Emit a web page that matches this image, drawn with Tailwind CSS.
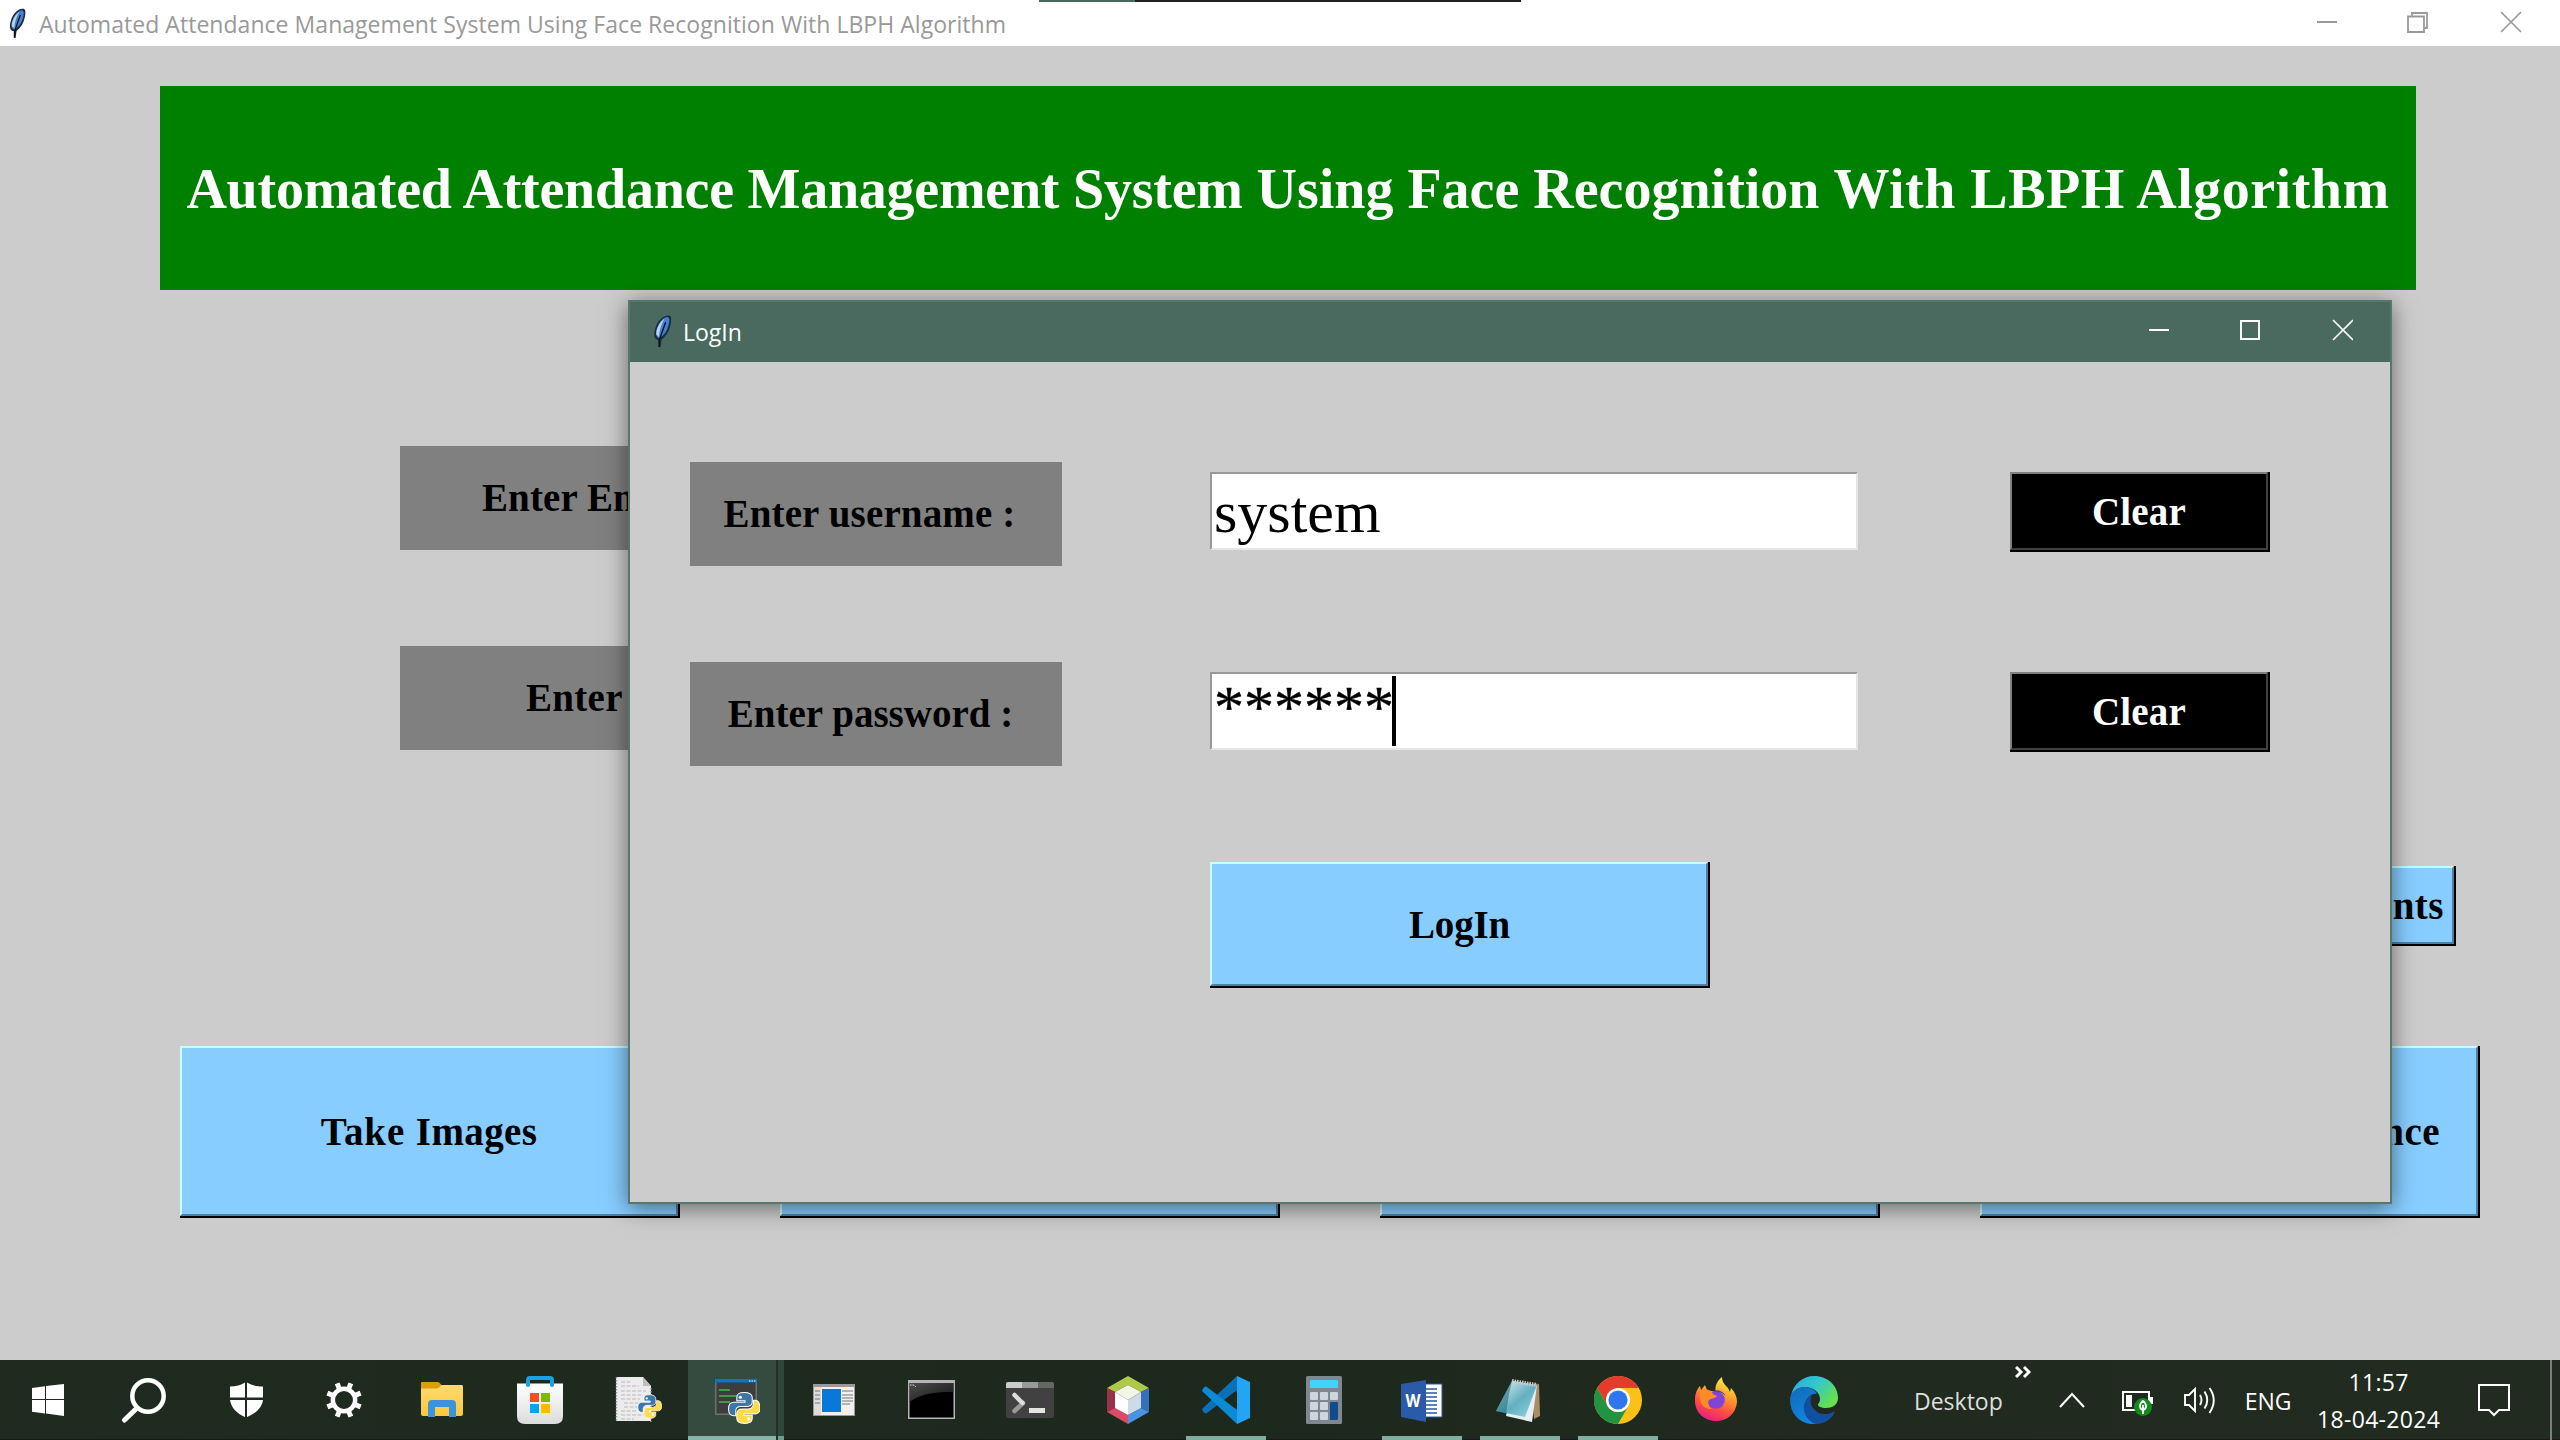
<!DOCTYPE html>
<html lang="en">
<head>
<meta charset="utf-8">
<title>Automated Attendance Management System</title>
<script src="https://cdn.jsdelivr.net/npm/@tailwindcss/browser@4"></script>
</head>
<body class="w-[2560px] h-[1440px] overflow-hidden relative bg-[#cccccc] font-['Liberation_Serif',serif]">

<svg class="absolute w-0 h-0">
  <defs>
    <symbol id="feather" viewBox="0 0 18 32">
      <path d="M14 0.500C17 0 18 2 17 8C16 15 13 20 8 24L7 31H5L5 24C1 24 0 19 2 13C4 6 9 1 14 .5Z" fill="#1a2b40"/>
      <path d="M13.800 2C17 2.500 15.500 9 13.500 14C11.500 18.500 8 21.500 5 22.500C1.500 20 2.500 15 4.500 11C6.500 6 10 2.500 13.800 2Z" fill="#4580cc"/>
      <path d="M11 3.500C6.500 7 3 12 3 19L5.500 21C6 14 8 9 11 3.500Z" fill="#b9d2ee"/>
      <path d="M12 7L6 24L6 31" stroke="#0c131b" stroke-width="1.300" fill="none"/>
    </symbol>
    <symbol id="python" viewBox="0 0 32 32">
      <path d="M16 1C10 1 9 3 9 6V9H17V10.500H6C3 10.500 1 13 1 17S3 23.500 6 23.500H8V19C8 16 10 14.500 13 14.500H19C22 14.500 24 13 24 10V6C24 3 21 1 16 1Z" fill="#3b77a8" stroke="#fff" stroke-width="1"/>
      <path d="M16.500 31C22.500 31 24 29 24 26V23H16V21.500H27C30 21.500 32 19 31.500 15S30 8.500 27 8.500H25V12C25 15.500 22 17 20 17H14C11 17 9 19 9 22V26C9 29 11 31 16.500 31Z" fill="#ffdc4a" stroke="#fff" stroke-width="1"/>
      <circle cx="12.500" cy="5.500" r="1.500" fill="#fff"/><circle cx="20.500" cy="26.500" r="1.500" fill="#fff"/>
    </symbol>
    <linearGradient id="glass" x1="0" y1="0" x2="1" y2="1"><stop offset="0" stop-color="#666"/><stop offset="1" stop-color="#1a1a1a"/></linearGradient>
    <linearGradient id="note" x1="0" y1="0" x2="1" y2="1"><stop offset="0" stop-color="#e6f5f8"/><stop offset=".55" stop-color="#64afbf"/><stop offset="1" stop-color="#8fdbe9"/></linearGradient>
    <linearGradient id="fold" x1="0" y1="0" x2="0" y2="1"><stop offset="0" stop-color="#ffdc78"/><stop offset="1" stop-color="#fdc63b"/></linearGradient>
    <linearGradient id="bag" x1="0" y1="0" x2="0" y2="1"><stop offset="0" stop-color="#fff"/><stop offset="1" stop-color="#dcdcdc"/></linearGradient>
    <linearGradient id="fox" x1=".7" y1="0" x2=".3" y2="1"><stop offset="0" stop-color="#fff34a"/><stop offset=".35" stop-color="#ffa52b"/><stop offset=".7" stop-color="#ff4a43"/><stop offset="1" stop-color="#e51a8a"/></linearGradient>
    <linearGradient id="edgeTop" x1="0" y1="0" x2="1" y2=".6"><stop offset="0" stop-color="#2aa9e0"/><stop offset=".5" stop-color="#33c6d0"/><stop offset="1" stop-color="#66e04b"/></linearGradient>
    <linearGradient id="edgeBody" x1="0" y1="0" x2=".5" y2="1"><stop offset="0" stop-color="#1369b8"/><stop offset="1" stop-color="#0f86df"/></linearGradient>
  </defs>
</svg>

<!-- main window -->
<header class="h-[46px] bg-white flex items-center justify-between relative text-[#999999]">
  <div class="flex items-center">
    <svg class="w-[17px] h-[33px] ml-[9px]"><use href="#feather"/></svg>
    <span class="ml-[13px] mt-[3px] text-[23px] tracking-[0.04px] leading-none whitespace-nowrap font-['Open_Sans',sans-serif]">Automated Attendance Management System Using Face Recognition With LBPH Algorithm</span>
  </div>
  <svg class="w-[206px] h-[24px] mr-[37px] mb-[2px]" fill="none" stroke="currentColor" stroke-width="1.800">
    <path d="M0 12H20M91 6.500H107V22H91ZM95 6V3H110V18H107"/>
    <path d="M184 2L204 22M204 2L184 22" stroke-width="1.700"/>
  </svg>
  <div class="absolute left-[1039px] top-0 flex"><i class="w-24 h-[2px] bg-[#4a695f]"></i><i class="w-[386px] h-[2px] bg-[#221f1f]"></i></div>
</header>

<main class="h-[1314px] pt-10 flex flex-col font-bold text-[39px] leading-none text-black">
  <h1 class="ml-40 w-[2256px] h-[204px] pt-[2px] bg-[#008000] text-white text-[56px] flex items-center justify-center whitespace-pre"><span class="tracking-[-0.24px]">Automated Attendance Management System </span><span>Using Face Recognition </span><span class="tracking-[0.5px]">With LBPH Algorithm</span></h1>
  <div class="mt-[156px] ml-[400px] w-[372px] h-[104px] bg-[#808080] flex items-center pl-[82px] pb-[2px] whitespace-nowrap"><span class="tracking-[0.1px]">Enter En</span></div>
  <div class="mt-24 ml-[400px] w-[372px] h-[104px] bg-[#808080] flex items-center pl-[126px] pb-[2px] whitespace-nowrap"><span class="tracking-[0.3px]">Enter</span></div>
  <div class="mt-[116px] ml-[2000px] w-[456px] h-20 bg-black"><div class="w-[454px] h-[78px] border-2 border-t-[#c6ffff] border-l-[#c6ffff] border-r-[#5080a0] border-b-[#5080a0] bg-[#87cdff] flex items-center justify-end pr-[8px] tracking-[0.5px]">nts</div></div>
  <div class="mt-[100px] ml-[180px] flex gap-[100px]">
    <div class="w-[500px] h-[172px] bg-black"><div class="w-[498px] h-[170px] border-2 border-t-[#c6ffff] border-l-[#c6ffff] border-r-[#5080a0] border-b-[#5080a0] bg-[#87cdff] flex items-center justify-center whitespace-pre"><span class="tracking-[0.9px]">Take </span><span class="tracking-[0.4px]">Images</span></div></div>
    <div class="w-[500px] h-[172px] bg-black"><div class="w-[498px] h-[170px] border-2 border-t-[#c6ffff] border-l-[#c6ffff] border-r-[#5080a0] border-b-[#5080a0] bg-[#87cdff]"></div></div>
    <div class="w-[500px] h-[172px] bg-black"><div class="w-[498px] h-[170px] border-2 border-t-[#c6ffff] border-l-[#c6ffff] border-r-[#5080a0] border-b-[#5080a0] bg-[#87cdff]"></div></div>
    <div class="w-[500px] h-[172px] bg-black"><div class="w-[498px] h-[170px] border-2 border-t-[#c6ffff] border-l-[#c6ffff] border-r-[#5080a0] border-b-[#5080a0] bg-[#87cdff] flex items-center justify-end pr-[36px] tracking-[0.5px]">nce</div></div>
  </div>
</main>

<!-- login dialog -->
<section class="absolute left-[628px] top-[300px] w-[1764px] h-[904px] border-2 border-[#58776c] bg-[#cccccc] shadow-[0_4px_22px_rgba(0,0,0,0.5)] text-[39px] leading-none">
  <div class="h-[60px] bg-[#4a695f] text-white flex justify-between">
    <div class="flex">
      <svg class="w-[19px] h-[33px] ml-[23px] mt-[13px]"><use href="#feather"/></svg>
      <span class="ml-[11px] mt-[19px] text-[23px] font-['Open_Sans',sans-serif]">LogIn</span>
    </div>
    <svg class="w-[206px] h-[24px] mr-[37px] mt-[16px]" fill="none" stroke="currentColor" stroke-width="1.900">
      <path d="M2 12H22M94 3H112V21H94Z"/>
      <path d="M186 2L206 22M206 2L186 22" stroke-width="1.700"/>
    </svg>
  </div>
  <div class="mt-[100px] ml-[60px] flex items-start h-[200px]">
    <div class="w-[372px] h-[104px] bg-[#808080] font-bold flex items-center justify-center pb-[2px] pr-[13px] whitespace-nowrap tracking-[0.15px]">Enter username :</div>
    <div class="ml-[148px] mt-[10px] w-[648px] h-[78px] bg-white border-2 border-t-[#999] border-l-[#999] border-r-[#e6e6e6] border-b-[#e6e6e6] flex items-center pl-[2px] pt-[1px] text-[60px]">system</div>
    <div class="ml-[152px] mt-[10px] w-[260px] h-20 bg-black"><div class="w-[258px] h-[78px] border-2 border-t-[#808080] border-l-[#808080] border-r-[#404040] border-b-[#404040] font-bold text-white flex items-center justify-center tracking-[0.2px]">Clear</div></div>
  </div>
  <div class="ml-[60px] flex items-start h-[200px]">
    <div class="w-[372px] h-[104px] bg-[#808080] font-bold flex items-center justify-center pb-[2px] pr-[11px] whitespace-nowrap">Enter password :</div>
    <div class="ml-[148px] mt-[10px] w-[648px] h-[78px] bg-white border-2 border-t-[#999] border-l-[#999] border-r-[#e6e6e6] border-b-[#e6e6e6] flex items-center pl-[2px] text-[60px]"><span class="-mt-[9px] [-webkit-text-stroke:0.4px_#000]">******</span><i class="-ml-[2px] w-1 h-[70px] bg-black"></i></div>
    <div class="ml-[152px] mt-[10px] w-[260px] h-20 bg-black"><div class="w-[258px] h-[78px] border-2 border-t-[#808080] border-l-[#808080] border-r-[#404040] border-b-[#404040] font-bold text-white flex items-center justify-center tracking-[0.2px]">Clear</div></div>
  </div>
  <div class="ml-[580px] w-[500px] h-[126px] bg-black"><div class="w-[498px] h-[124px] border-2 border-t-[#c6ffff] border-l-[#c6ffff] border-r-[#5080a0] border-b-[#5080a0] bg-[#87cdff] font-bold flex items-center justify-center pl-[1px] pt-[1px] tracking-[-0.2px]">LogIn</div></div>
</section>

<!-- taskbar -->
<footer class="relative h-20 bg-linear-to-r from-[#202b1f] via-[#1e291d] to-[#222b1f] border-b border-[#25121c] flex text-white font-['Open_Sans',sans-serif] text-[23px] leading-none">
  <nav class="flex h-20 pl-[1px]">
    <div class="w-[98px] flex items-center justify-center pr-1"><svg class="size-12" viewBox="0 0 48 48"><path fill="#fff" d="M8 12L21 10.200V23H8ZM22 10L40 8V23H22ZM8 24H21V37.400L8 35.700ZM22 24H40V40L22 37.500Z"/></svg></div>
    <div class="w-[98px] flex items-center justify-center"><svg class="size-12 overflow-visible" viewBox="0 0 48 48" fill="none" stroke="#fff"><circle cx="24" cy="20" r="15.700" stroke-width="4.500"/><path d="M13.500 31.500L1 43.500" stroke-width="5" stroke-linecap="round" transform="translate(-.5 .5)"/></svg></div>
    <div class="w-[98px] flex items-center justify-center"><svg class="size-12" viewBox="0 0 48 48" fill="#fff"><path d="M23 6.500V21.500H8V10.500C14 10.500 19 9 23 6.500ZM25 6.500C29 9 34 10.500 41 10.500V21.500H25ZM8 24H23V41C14 37 9 31 8 24ZM25 24H41C40 31 35 37 25 41Z"/></svg></div>
    <div class="w-[98px] flex items-center justify-center"><svg class="size-12" viewBox="0 0 48 48"><circle cx="24" cy="24" r="11.200" fill="none" stroke="#fff" stroke-width="4.500"/><g stroke="#fff" stroke-width="5" fill="none" transform="rotate(22.500 24 24)"><path d="M24 6V13M24 35V42M6 24H13M35 24H42M11.300 11.300L16 16M32 32L36.700 36.700M36.700 11.300L32 16M16 32L11.300 36.700"/></g></svg></div>
    <div class="w-[98px] flex items-center justify-center"><svg class="size-12" viewBox="0 0 48 48"><path d="M3 8Q3 6 5 6H19L23 9H44Q45 9 45 11V38Q45 40 43 40H5Q3 40 3 38Z" fill="url(#fold)"/><path d="M3 8Q3 6 5 6H19Q22 6 23 9Q21 12.500 18 12.500H3Z" fill="#dd9c0a"/><path d="M10 41V28Q10 24 14 24H34Q38 24 38 28V41H31V31H17V41Z" fill="#3a94da"/></svg></div>
    <div class="w-[98px] flex items-center justify-center"><svg class="size-12" viewBox="0 0 48 48"><path d="M1 7.500H47V40Q47 48 39 48H9Q1 48 1 40Z" fill="url(#bag)"/><path d="M12 9V4Q12 2 14 2H34Q36 2 36 4V9" fill="none" stroke="#1ba1e6" stroke-width="4" stroke-linecap="round"/><path d="M14 17H23V26H14Z" fill="#f25022"/><path d="M25 17H34V26H25Z" fill="#7fba00"/><path d="M14 28H23V37H14Z" fill="#00a4ef"/><path d="M25 28H34V37H25Z" fill="#ffb900"/></svg></div>
    <div class="w-[99px] flex items-center justify-center pr-[1px]"><svg class="size-12" viewBox="0 0 48 48"><path d="M2 1H29L37 10V45H2Z" fill="#ececec"/><path d="M29 1V10H37Z" fill="#bdbdbd"/><path d="M2.500 1V46M37 12V46" stroke="#999" stroke-width="1.500" stroke-dasharray="1.500 1.500"/><path d="M7 6H18M7 10H25M7 15H32M7 19H28M7 23H26M10 27H24M10 31H23M7 35H23M7 39H30M7 43H20" stroke="#b9b9b9" stroke-dasharray="4 1.500"/><use href="#python" x="23" y="17" width="25" height="27"/></svg></div>
    <div class="w-[96px] flex justify-center bg-[#354b40] border-b-4 border-[#86b5a9] relative"><svg class="size-12 mt-4" viewBox="0 0 48 48"><path d="M3 3H45V39H3Z" fill="#707070"/><path d="M4.500 6H43.500V37.500H4.500Z" fill="#3d3d3d"/><path d="M3 3H45V6.500H3Z" fill="#0b76c4"/><path d="M37 5H44" stroke="#fff" stroke-dasharray="1.500 1"/><path d="M7 14H18M7 20H26M7 26H18" stroke="#3f9b42" stroke-width="2"/><use href="#python" x="15.500" y="15.500" width="33" height="33"/></svg><i class="absolute right-[6px] top-0 w-[2px] h-20 bg-[#223029]"></i><i class="absolute right-0 top-0 w-[6px] h-20 bg-[#223029]/20"></i></div>
    <div class="w-[99px] flex items-center justify-center"><svg class="size-12" viewBox="0 0 48 48"><path d="M3 8H45V40H3Z" fill="#999"/><path d="M4 11H44V39H4Z" fill="#f0f0f0"/><path d="M4 11H11V39H4Z" fill="#ddd"/><path d="M12 13H31V36H12Z" fill="#0a78d7"/><path d="M5 15H10M5 19H10M5 23H10M5 27H10M32 15H43M32 19H43M32 22H43M32 25H43M32 28H40" stroke="#777" stroke-width="1.200"/></svg></div>
    <div class="w-[98px] flex items-center justify-center"><svg class="size-12" viewBox="0 0 48 48"><path d="M0 4H47V43H0Z" fill="#b5b5b5"/><path d="M1.500 7H45.500V41.500H1.500Z" fill="#000"/><path d="M1.500 7H45.500V16Q15 15 1.500 26Z" fill="url(#glass)" opacity=".75"/><path d="M2 9H6L8 11" stroke="#ddd" stroke-dasharray="1.500 1" fill="none"/></svg></div>
    <div class="w-[98px] flex items-center justify-center"><svg class="size-12" viewBox="0 0 48 48"><path d="M0 8Q0 6 2 6H46Q48 6 48 8V40Q48 42 46 42H2Q0 42 0 40Z" fill="#414141"/><path d="M0 12V8Q0 6 2 6H16V12Z" fill="#ccc"/><path d="M16 6H32V12H16Z" fill="#999"/><path d="M32 6H46Q48 6 48 8V12H32Z" fill="#666"/><path d="M17 27L8.500 35" stroke="#999" stroke-width="4.500" stroke-linecap="round"/><path d="M8.500 19L16.500 27" stroke="#ddd" stroke-width="4.500" stroke-linecap="round"/><path d="M23 32H39V37H23Z" fill="#e4e4e4"/></svg></div>
    <div class="w-[98px] flex items-center justify-center"><svg class="size-12" viewBox="0 0 48 48"><path d="M3 12L24 0L45 12L37 16L24 9L11 16Z" fill="#aec94a"/><path d="M3 12V36L11 32V16Z" fill="#98314c"/><path d="M3 36L24 48V39L11 32Z" fill="#dc4a68"/><path d="M45 12V36L37 32V16Z" fill="#3471bd"/><path d="M45 36L24 48V39L37 32Z" fill="#4b92e2"/><path d="M24 9L37 16L24 24L11 16Z" fill="#f3f6e2"/><path d="M11 16L24 24V39L11 32Z" fill="#fff"/><path d="M37 16L24 24V39L37 32Z" fill="#cfdae8"/></svg></div>
    <div class="w-[98px] flex justify-center relative"><svg class="size-12 mt-4" viewBox="0 0 48 48"><path d="M35 0L48 6V42L35 48Z" fill="#24a4f4"/><path d="M35 0V14L5 37Q3.500 38 2 36.500L.8 35Q-.5 33.500 1 32Z" fill="#0a70b8"/><path d="M35 48V34L5 11Q3.500 10 2 11.500L.8 13Q-.5 14.500 1 16Z" fill="#0b8ad6"/></svg><i class="absolute bottom-0 w-20 h-1 bg-[#80aea0]"></i></div>
    <div class="w-[98px] flex items-center justify-center"><svg class="size-12" viewBox="0 0 48 48"><rect x="6" width="36" height="48" rx="1.500" fill="#7f8790"/><rect x="10" y="4" width="28" height="8" rx="1" fill="#42d3f8"/><g fill="#cdd6df"><rect x="10" y="16" width="8" height="8" rx="1"/><rect x="20" y="16" width="8" height="8" rx="1"/><rect x="30" y="16" width="8" height="8" rx="1"/><rect x="10" y="26" width="8" height="8" rx="1"/><rect x="20" y="26" width="8" height="8" rx="1"/><rect x="10" y="36" width="8" height="8" rx="1"/><rect x="20" y="36" width="8" height="8" rx="1"/></g><rect x="30" y="26" width="8" height="18" rx="1" fill="#134a8c"/></svg></div>
    <div class="w-[98px] flex justify-center relative"><svg class="size-12 mt-4" viewBox="0 0 48 48"><path d="M26 8H44V41H26Z" fill="#fff" stroke="#2b579a"/><path d="M28 13H39M28 17H39M28 21H39M28 25H39M28 29H39M28 33H39M28 37H39" stroke="#2b579a" stroke-width="1.500"/><path d="M3 8L28 4V46L3 41Z" fill="#2b5aa8"/><text x="15" y="31" text-anchor="middle" fill="#fff" font-family="Open Sans" font-weight="700" font-size="17" textLength="15" lengthAdjust="spacingAndGlyphs">W</text></svg><i class="absolute bottom-0 w-20 h-1 bg-[#80aea0]"></i></div>
    <div class="w-[98px] flex justify-center relative"><svg class="size-12 mt-4" viewBox="0 0 48 48"><path d="M35 9L43 8L44 40L38 43Z" fill="#aa8e65"/><path d="M17 5L41 9L36 46L10 40Z" fill="#e8eef2"/><path d="M16 5L41 9L29 41L0 35Z" fill="url(#note)"/><path d="M16 5L13 18L10 38L0 35Z" fill="#1b6c78" opacity=".55"/><path d="M16 5L41 9" stroke="#cdcdcd" stroke-width="4" stroke-dasharray="1.500 1"/></svg><i class="absolute bottom-0 w-20 h-1 bg-[#80aea0]"></i></div>
    <div class="w-[98px] flex justify-center relative"><svg class="size-12 mt-4" viewBox="0 0 48 48"><circle cx="24" cy="24" r="24" fill="#fbc116"/><path d="M24 12H44.800A24 24 0 0 0 3.200 12L13.600 30L24 12Z" fill="#e33b2e"/><path d="M3.200 12A24 24 0 0 0 24 48L34.400 30A12 12 0 0 1 13.600 30Z" fill="#229342"/><circle cx="24" cy="24" r="12" fill="#fff"/><circle cx="24" cy="24" r="9.600" fill="#2f76ee"/></svg><i class="absolute bottom-0 w-20 h-1 bg-[#80aea0]"></i></div>
    <div class="w-[98px] flex items-center justify-center"><svg class="size-12" viewBox="0 0 48 48"><path d="M24 16C22 10 26 4 30 1C30 6 33 9 36 12L38 16L39 12C43 16 45 21 45 26C44 38 35 45 24 45C12 45 3 36 3 25C3 19 4 14 8 10L9 14L13 9L15 14Z" fill="url(#fox)"/><circle cx="24" cy="24" r="8.800" fill="#8244d8"/><path d="M8 15C14 12 19 14 21 18L25 20C23 23 19 22 17 24C15 27 17 31 20 33C12 34 6 27 8 15Z" fill="#ff8b26"/><path d="M21 15C26 13 31 15 34 20L30 17Z" fill="#5238bd"/></svg></div>
    <div class="w-[98px] flex items-center justify-center"><svg class="size-12" viewBox="0 0 48 48"><path d="M1 20C3 8 13 0 24 0C38 0 48 10 48 22C48 29 42 32 36 32C31 32 28 30 28 29C28 27 30 27 30 23C30 16 23 11 15 11C8 11 3 15 1 20Z" fill="url(#edgeTop)"/><path d="M0 24C0 16 7 11 15 11C21 11 25 14 27 18C23 17 18 20 16 25C12 35 18 44 27 48C12 50 0 39 0 24Z" fill="url(#edgeBody)"/><path d="M20 20C10 27 12 43 26 48C34 48 40 44 44 38C45 36 44 35.500 43 36C36 40 27 38 23 32C20 28 20 24 22 19Z" fill="#124fa0"/></svg></div>
  </nav>
  <div class="flex h-20 items-center grow">
    <span class="ml-[51px] mt-[2px] text-[#dedede]">Desktop</span>
    <svg class="ml-[12px] -mt-[56px] w-4 h-3" fill="none" stroke="#fff" stroke-width="3"><path d="M1 1L6 6L1 11M9 1L14 6L9 11"/></svg>
    <svg class="ml-[28px] w-[26px] h-4" fill="none" stroke="#fff" stroke-width="2"><path d="M1 15L13 2L25 15"/></svg>
    <svg class="ml-[37px] mt-[8px] w-[32px] h-[26px]" fill="none"><path d="M1 1H27V19H1Z" stroke="#fff" stroke-width="2"/><path d="M28 6H31V13H28Z" fill="#fff"/><path d="M4 4H10V16H4Z" fill="#fff"/><circle cx="21" cy="16" r="9" fill="#138a1d"/><path d="M21 10C17 13 17 18 21 19C25 18 25 13 21 10ZM21 14V23" stroke="#fff" stroke-width="1.800"/></svg>
    <svg class="ml-[30px] w-8 h-8" viewBox="0 0 32 32" fill="none" stroke="#fff" stroke-width="1.900"><path d="M1 11H5L11 5V27L5 21H1Z"/><path d="M16 11Q19 16 16 21M20.500 7.500Q26 16 20.500 24.500M25.500 4Q34 16 25.500 29"/></svg>
    <span class="ml-[29px] mt-[3px]">ENG</span>
    <div class="ml-[25px] w-[124px] text-center flex flex-col gap-[14px] mt-[1px] tracking-[0.3px]"><span>11:57</span><span>18-04-2024</span></div>
    <svg class="ml-[37px] w-8 h-9" fill="none" stroke="#fff" stroke-width="2"><path d="M1 3H31V28H21L16 33L11 28H1Z"/></svg>
    <i class="ml-auto mr-[8px] w-[2px] h-20 bg-[#7a817a]"></i>
  </div>
</footer>
</body>
</html>
